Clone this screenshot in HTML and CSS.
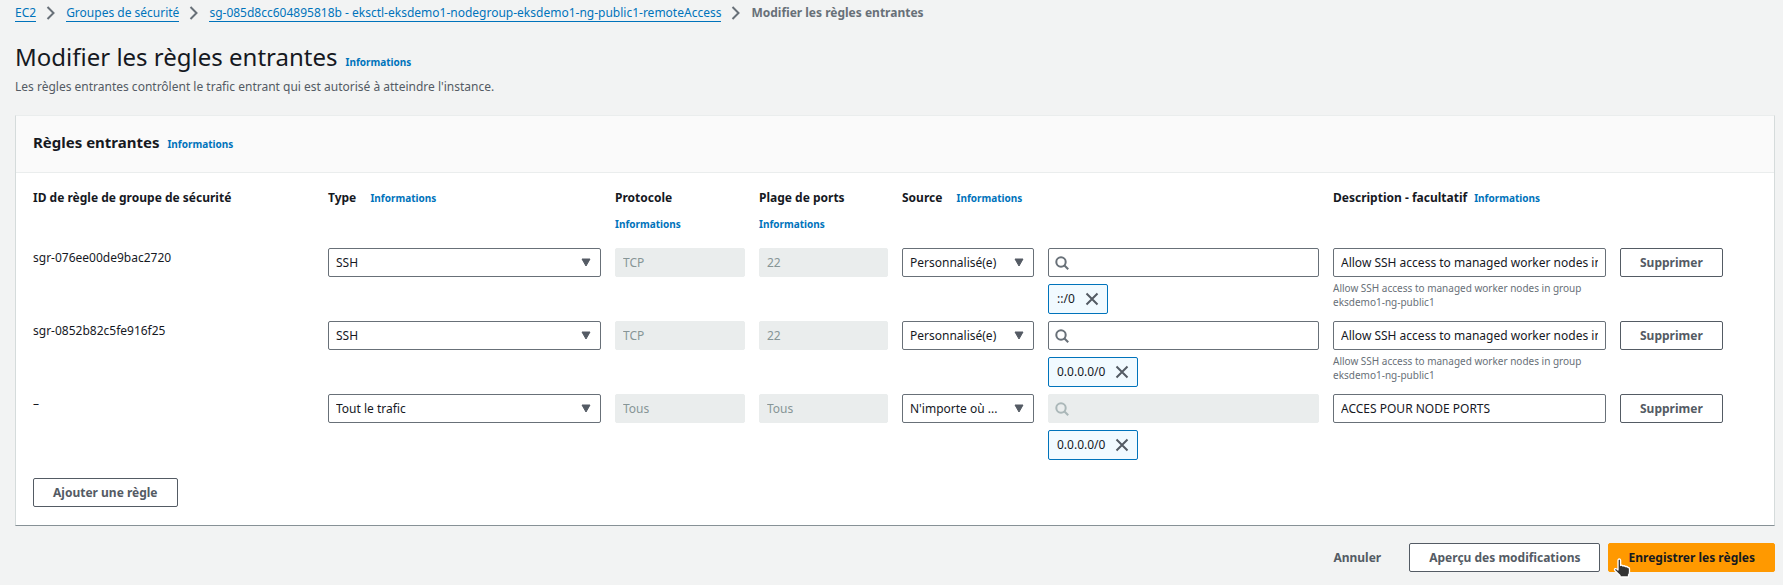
FILE: index.html
```html
<!DOCTYPE html>
<html lang="fr">
<head>
<meta charset="utf-8">
<title>Modifier les règles entrantes</title>
<link rel="stylesheet" href="styles.css">
</head>
<body>
<svg class="sprite" aria-hidden="true">
  <symbol id="chevron" viewBox="0 0 10 14"><path d="M1.5 1l6 6-6 6" fill="none" stroke="currentColor" stroke-width="2"/></symbol>
  <symbol id="caret" viewBox="0 0 10 9"><path d="M1 1h8L5 8z" fill="currentColor" stroke="currentColor" stroke-linejoin="round"/></symbol>
  <symbol id="search" viewBox="0 0 14 14"><circle cx="6" cy="6" r="4.7" fill="none" stroke="currentColor" stroke-width="2"/><path d="M9.2 9.2l4 4" fill="none" stroke="currentColor" stroke-width="2"/></symbol>
  <symbol id="close" viewBox="0 0 14 14"><path d="M1.5 1.5l11 11M12.500 1.500l-11 11" fill="none" stroke="currentColor" stroke-width="2"/></symbol>
</svg>
<nav class="breadcrumb" aria-label="Fil d'Ariane">
  <a href="#">EC2</a>
  <svg><use href="#chevron"/></svg>
  <a href="#">Groupes de sécurité</a>
  <svg><use href="#chevron"/></svg>
  <a href="#">sg-085d8cc604895818b - eksctl-eksdemo1-nodegroup-eksdemo1-ng-public1-remoteAccess</a>
  <svg><use href="#chevron"/></svg>
  <span class="current">Modifier les règles entrantes</span>
</nav>
<main>
  <header class="page-header">
    <div class="title-line"><h1>Modifier les règles entrantes</h1><a class="info" href="#">Informations</a></div>
    <p>Les règles entrantes contrôlent le trafic entrant qui est autorisé à atteindre l'instance.</p>
  </header>
  <section class="panel">
    <header class="panel-header"><h2>Règles entrantes</h2><a class="info" href="#">Informations</a></header>
    <div class="panel-body">
      <table class="rules">
        <thead>
          <tr>
            <th>ID de règle de groupe de sécurité</th>
            <th class="spaced">Type <a class="info" href="#">Informations</a></th>
            <th class="stacked">Protocole <a class="info" href="#">Informations</a></th>
            <th class="stacked">Plage de ports <a class="info" href="#">Informations</a></th>
            <th class="spaced wide" colspan="2">Source <a class="info" href="#">Informations</a></th>
            <th class="near">Description - facultatif <a class="info" href="#">Informations</a></th>
          </tr>
        </thead>
        <tbody>
          <tr>
            <td class="rule-id">sgr-076ee00de9bac2720</td>
            <td><div class="select"><select aria-label="Type"><option>SSH</option></select><svg><use href="#caret"/></svg></div></td>
            <td><input class="field" aria-label="Protocole" value="TCP" disabled></td>
            <td><input class="field" aria-label="Plage de ports" value="22" disabled></td>
            <td><div class="select"><select aria-label="Source"><option>Personnalisé(e)</option></select><svg><use href="#caret"/></svg></div></td>
            <td>
              <div class="search"><svg><use href="#search"/></svg><input class="field" type="text" aria-label="Rechercher une source"></div>
              <div class="tag"><span>::/0</span><button type="button" aria-label="Retirer ::/0"><svg><use href="#close"/></svg></button></div>
            </td>
            <td>
              <input class="field" aria-label="Description" value="Allow SSH access to managed worker nodes in group eksdemo1-ng-public1">
              <p class="hint">Allow SSH access to managed worker nodes in group eksdemo1-ng-public1</p>
            </td>
            <td><button type="button" class="btn">Supprimer</button></td>
          </tr>
          <tr>
            <td class="rule-id">sgr-0852b82c5fe916f25</td>
            <td><div class="select"><select aria-label="Type"><option>SSH</option></select><svg><use href="#caret"/></svg></div></td>
            <td><input class="field" aria-label="Protocole" value="TCP" disabled></td>
            <td><input class="field" aria-label="Plage de ports" value="22" disabled></td>
            <td><div class="select"><select aria-label="Source"><option>Personnalisé(e)</option></select><svg><use href="#caret"/></svg></div></td>
            <td>
              <div class="search"><svg><use href="#search"/></svg><input class="field" type="text" aria-label="Rechercher une source"></div>
              <div class="tag"><span>0.0.0.0/0</span><button type="button" aria-label="Retirer 0.0.0.0/0"><svg><use href="#close"/></svg></button></div>
            </td>
            <td>
              <input class="field" aria-label="Description" value="Allow SSH access to managed worker nodes in group eksdemo1-ng-public1">
              <p class="hint">Allow SSH access to managed worker nodes in group eksdemo1-ng-public1</p>
            </td>
            <td><button type="button" class="btn">Supprimer</button></td>
          </tr>
          <tr>
            <td class="rule-id">–</td>
            <td><div class="select"><select aria-label="Type"><option>Tout le trafic</option></select><svg><use href="#caret"/></svg></div></td>
            <td><input class="field" aria-label="Protocole" value="Tous" disabled></td>
            <td><input class="field" aria-label="Plage de ports" value="Tous" disabled></td>
            <td><div class="select"><select aria-label="Source"><option>N'importe où ...</option></select><svg><use href="#caret"/></svg></div></td>
            <td>
              <div class="search off"><svg><use href="#search"/></svg><input class="field" type="text" aria-label="Rechercher une source" disabled></div>
              <div class="tag"><span>0.0.0.0/0</span><button type="button" aria-label="Retirer 0.0.0.0/0"><svg><use href="#close"/></svg></button></div>
            </td>
            <td><input class="field" aria-label="Description" value="ACCES POUR NODE PORTS"></td>
            <td><button type="button" class="btn">Supprimer</button></td>
          </tr>
        </tbody>
      </table>
      <button type="button" class="btn">Ajouter une règle</button>
    </div>
  </section>
  <footer class="actions">
    <button type="button" class="btn link">Annuler</button>
    <button type="button" class="btn">Aperçu des modifications</button>
    <button type="button" class="btn primary">Enregistrer les règles
      <svg class="pointer" viewBox="0 0 18 20" aria-hidden="true"><path d="M5 2.500Q5 1 6.300 1T7.600 2.500V7.500Q9 6.700 10 8Q11.500 7.300 12.500 8.700Q14 8 15 9.500Q16.500 9.300 16.500 11V14Q16.500 16 15.500 17V19H7V17.500L1.800 12.500Q1 11.200 2.200 10.700Q3.500 10.300 5 12Z" fill="#333" stroke="#fff" stroke-width="1.300" stroke-linejoin="round"/></svg>
    </button>
  </footer>
</main>
</body>
</html>
```
FILE: styles.css
```css
* { box-sizing: border-box; }
body {
  margin: 0;
  background: #f2f3f3;
  color: #16191f;
  font: 12px/20px "Noto Sans", "Open Sans", sans-serif;
}
h1, h2, p { margin: 0; }
a { color: #0073bb; text-decoration: none; }
button, input, select { font: inherit; color: inherit; }
.sprite { display: none; }

.breadcrumb {
  display: flex;
  align-items: center;
  gap: 10px;
  padding: 4px 15px 0;
  white-space: nowrap;
}
.breadcrumb a { height: 18px; line-height: 18px; border-bottom: 1px solid #0073bb; }
.breadcrumb svg { width: 10px; height: 14px; color: #687078; }
.breadcrumb .current { line-height: 18px; color: #687078; font-weight: 700; }

main { padding: 0 8px 10px 15px; }
.page-header { padding: 17px 0 18px; }
.title-line { display: flex; align-items: baseline; gap: 8px; }
h1 { font-size: 24px; line-height: 36px; font-weight: 400; }
.page-header p { color: #545b64; padding-top: 2px; }
.info { font-size: 10px; font-weight: 700; }

.panel {
  background: #fff;
  border: 1px solid #d5dbdb;
  border-top-color: #eaeded;
  border-bottom-color: #879196;
}
.panel-header {
  display: flex;
  align-items: baseline;
  gap: 8px;
  padding: 14px 17px 18px;
  background: #fafafa;
  border-bottom: 1px solid #eaeded;
}
h2 { font-size: 15px; line-height: 24px; font-weight: 700; }
.panel-body { padding: 11px 15px 18px 17px; }

.rules, .rules thead, .rules tbody { display: block; }
.rules tr {
  display: grid;
  grid-template-columns: 281fr 273fr 130fr 129fr 132fr 271fr 273fr 139fr;
  column-gap: 14px;
}
.rules tbody tr { padding-bottom: 7px; }
.rules thead tr { padding-bottom: 10px; }
.rules th, .rules td { padding: 0; min-width: 0; text-align: left; }
.rules th { line-height: 27px; font-weight: 700; white-space: nowrap; }
.rules th.spaced .info { margin-left: 11px; }
.rules th.near .info { margin-left: 4px; }
.rules th.stacked .info { display: block; }
.rules th.wide { grid-column: span 2; }

.field, .select select {
  display: block;
  width: 100%;
  height: 29px;
  padding: 0 7px;
  border: 1px solid #687078;
  border-radius: 2px;
  background: #fff;
}
.field:disabled { background: #eaeded; border-color: #eaeded; color: #879596; }
.select, .search { position: relative; }
.select select { appearance: none; }
.select svg {
  position: absolute;
  top: 10px;
  right: 10px;
  width: 10px;
  height: 9px;
  color: #545b64;
  pointer-events: none;
}
.search svg { position: absolute; top: 8px; left: 7px; width: 14px; height: 14px; color: #687078; }
.search.off svg { color: #aab7b8; }
.search .field { padding-left: 28px; }

.tag {
  display: inline-flex;
  align-items: center;
  gap: 10px;
  height: 30px;
  margin-top: 7px;
  padding: 0 8px;
  border: 1px solid #0073bb;
  border-radius: 2px;
  background: #f1faff;
  vertical-align: top;
}
.tag button { display: flex; padding: 0; border: 0; background: none; }
.tag svg { width: 14px; height: 14px; color: #545b64; }
.hint { margin-top: 4px; font-size: 10px; line-height: 14px; color: #687078; }

.btn {
  height: 29px;
  padding: 0 19px;
  border: 1px solid #545b64;
  border-radius: 2px;
  background: #fff;
  color: #545b64;
  font-weight: 700;
  white-space: nowrap;
}
.panel-body > .btn { display: block; margin-top: 11px; }
.actions { display: flex; justify-content: flex-end; gap: 8px; padding-top: 17px; }
.btn.link { background: none; border-color: transparent; }
.btn.primary { position: relative; background: #ff9900; border-color: #ff9900; color: #16191f; }
.pointer { position: absolute; left: 4px; top: 14px; width: 18px; height: 20px; }
```
